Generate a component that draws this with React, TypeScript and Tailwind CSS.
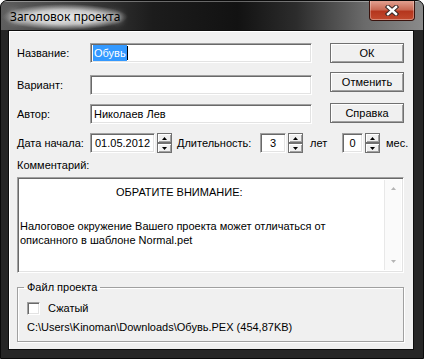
import React from 'react';

const sunken =
	'bg-white border border-t-[#a0a0a0] border-l-[#a0a0a0] border-r-white border-b-white shadow-[inset_1px_1px_0_#696969,inset_-1px_-1px_0_#e3e3e3]';

const raised = 'border border-[#707070] bg-[#f0f0f0] shadow-[inset_1px_1px_0_#fff,inset_-1px_-1px_0_#a0a0a0]';

const Arrow = ({ down = false, color = '#000' }: { down?: boolean; color?: string }) => (
	<svg width="5" height="3" viewBox="0 0 5 3">
		<path d={down ? 'M0 0H5L2.5 3Z' : 'M0 3H5L2.5 0Z'} fill={color} />
	</svg>
);

const Spin = () => (
	<div className="ml-[2px] flex h-[20px] w-[15px] flex-col">
		<div className={`${raised} flex h-[10px] items-center justify-center`}>
			<Arrow />
		</div>
		<div className={`${raised} flex h-[10px] items-center justify-center`}>
			<Arrow down />
		</div>
	</div>
);

const Field = ({ label, children, top }: { label: string; children?: React.ReactNode; top: string }) => (
	<div className={`flex h-[20px] items-center ${top}`}>
		<span className="w-[73px]">{label}</span>
		<div className={`${sunken} flex h-[20px] w-[222px] items-center pl-[2px]`}>{children}</div>
	</div>
);

const Button = ({ label, top }: { label: string; top: string }) => (
	<div className={`${raised} flex h-[20px] w-[74px] items-center justify-center ${top}`}>{label}</div>
);

const App = () => {
	return (
		<div className="flex h-[359px] w-[424px] flex-col overflow-hidden rounded-t-[7px] border border-[#0a0a0a] bg-[#262626] font-['Liberation_Sans',Arial,sans-serif] text-[11px] leading-[13px] text-black">
			{/* title bar */}
			<div className="relative flex h-[29px] shrink-0 items-center bg-[linear-gradient(90deg,#5e5e5e_0%,#474747_14%,#1c1c1c_36%,#121212_56%,#2c2c2c_70%,#6a6a6a_86%,#8a8a8a_100%)] pl-[1px] pt-[2px] shadow-[inset_0_1px_0_rgba(255,255,255,0.35)]">
				<span className="bg-[radial-gradient(ellipse_closest-side,rgba(235,235,235,0.95)_0%,rgba(220,220,220,0.8)_55%,rgba(200,200,200,0)_100%)] px-[8px] py-[6px] font-['Noto_Sans',sans-serif] text-[12px] leading-[14px] text-black [text-shadow:0_0_6px_#fff,0_0_10px_#fff]">
					Заголовок проекта
				</span>
				<div className="absolute right-[8px] top-0 flex h-[20px] w-[46px] items-center justify-center rounded-b-[4px] border border-t-0 border-[#3a120c] bg-[linear-gradient(180deg,#e2a090_0%,#c96a55_45%,#b5361e_55%,#c24a2e_100%)] shadow-[inset_0_-1px_0_rgba(255,255,255,0.35),inset_1px_0_0_rgba(255,255,255,0.3),inset_-1px_0_0_rgba(255,255,255,0.3)]">
					<svg width="14" height="11" viewBox="0 0 14 11">
						<path d="M3 2L11 9M11 2L3 9" stroke="#3a2a28" strokeWidth="4.5" strokeLinecap="square" />
						<path d="M3 2L11 9M11 2L3 9" stroke="#fff" strokeWidth="2.4" strokeLinecap="square" />
					</svg>
				</div>
			</div>

			{/* client */}
			<div className="flex flex-1 px-[7px] pb-[8px]">
				<div className="flex w-[406px] flex-col border border-[#0d0d0d] bg-[#f0f0f0] pl-[8px] pt-[12px] shadow-[inset_1px_1px_0_#fff]">
					<div className="flex">
						<div className="w-[296px]">
							<Field label="Название:" top="">
								<span className="h-[16px] bg-[#3399ff] px-[1px] leading-[16px] text-white">Обувь</span>
								<span className="h-[14px] w-[1px] bg-black" />
							</Field>
							<Field label="Вариант:" top="mt-[12px]" />
							<Field label="Автор:" top="mt-[9px]">
								<span className="pl-[1px]">Николаев Лев</span>
							</Field>
						</div>
						<div className="ml-[17px]">
							<Button label="ОК" top="" />
							<Button label="Отменить" top="mt-[9px]" />
							<Button label="Справка" top="mt-[11px]" />
						</div>
					</div>

					<div className="mt-[9px] flex h-[20px] items-center">
						<span className="w-[73px]">Дата начала:</span>
						<div className={`${sunken} flex h-[20px] w-[65px] items-center pl-[4px]`}>01.05.2012</div>
						<Spin />
						<span className="ml-[5px] w-[83px]">Длительность:</span>
						<div className={`${sunken} flex h-[20px] w-[26px] items-center justify-center`}>3</div>
						<Spin />
						<span className="ml-[7px] w-[32px]">лет</span>
						<div className={`${sunken} flex h-[20px] w-[21px] items-center justify-center`}>0</div>
						<Spin />
						<span className="ml-[6px]">мес.</span>
					</div>

					<div className="mt-[6px]">Комментарий:</div>

					<div className={`${sunken} mt-[5px] flex h-[96px] w-[387px]`}>
						<div className="flex-1 pl-[2px] pt-[7px] leading-[14px]">
							<div className="pl-[96px]">ОБРАТИТЕ ВНИМАНИЕ:</div>
							<div className="mt-[20px]">Налоговое окружение Вашего проекта может отличаться от</div>
							<div>описанного в шаблоне Normal.pet</div>
						</div>
						<div className="my-[2px] mr-[2px] flex w-[17px] flex-col items-center justify-between border-l border-[#e8e8e8] bg-[#fafafa] py-[7px]">
							<Arrow color="#b4b4b4" />
							<Arrow down color="#b4b4b4" />
						</div>
					</div>

					<fieldset className="mt-[8px] w-[387px] border border-[#a0a0a0] pb-[7px] shadow-[1px_1px_0_#fff,inset_1px_1px_0_#fff]">
						<legend className="ml-[6px] px-[3px]">Файл проекта</legend>
						<div className="mt-[8px] flex h-[13px] items-center pl-[9px]">
							<div className={`${sunken} h-[13px] w-[13px]`} />
							<span className="ml-[8px]">Сжатый</span>
						</div>
						<div className="mt-[6px] pl-[9px]">C:\Users\Kinoman\Downloads\Обувь.PEX (454,87KB)</div>
					</fieldset>
				</div>
			</div>
		</div>
	);
};

export default App;
